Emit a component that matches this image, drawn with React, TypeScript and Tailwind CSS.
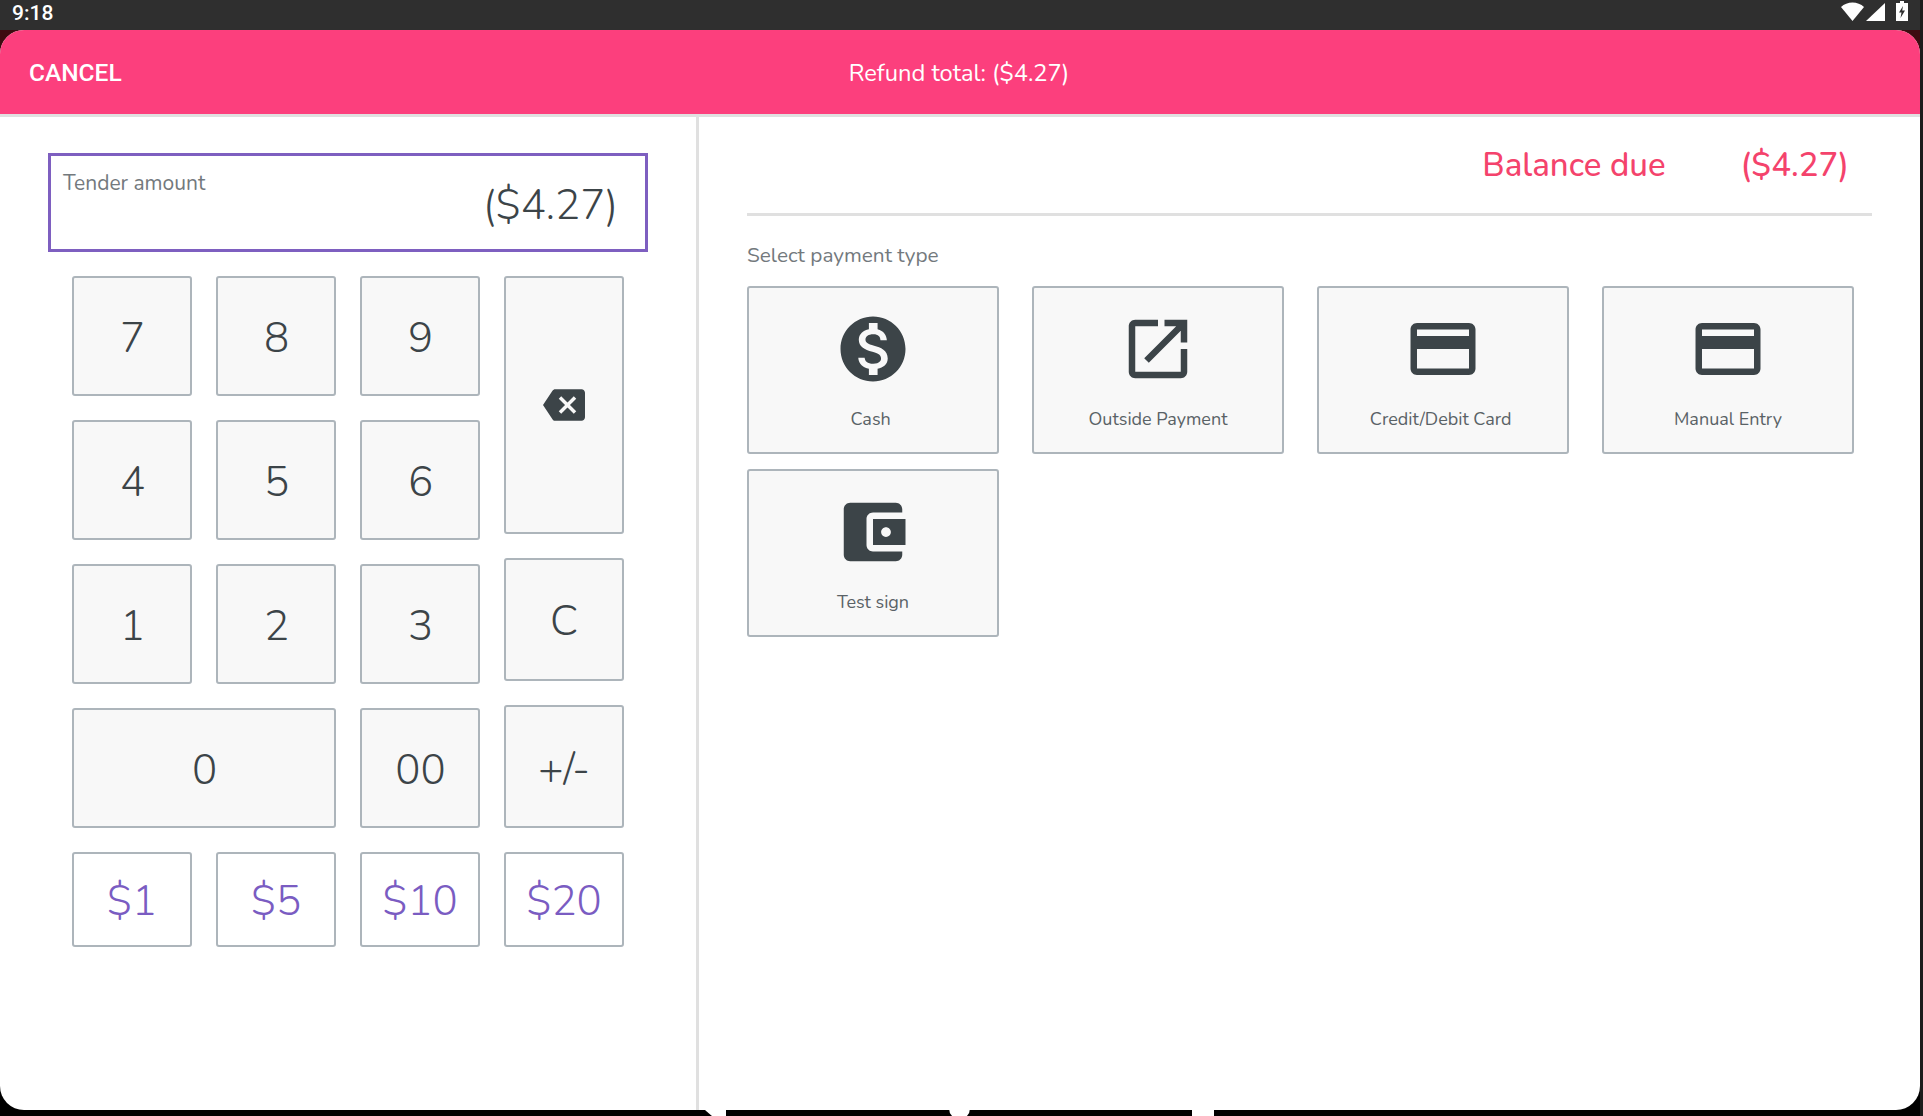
import React from "react";

const DARK = "#3c4448";

const Mat = ({ d, size, className }: { d: string; size: number; className?: string }) => (
  <svg width={size} height={size} viewBox="0 0 24 24" fill={DARK} className={className}>
    <path d={d} />
  </svg>
);

const paths = {
  cash: "M12 2C6.48 2 2 6.48 2 12s4.48 10 10 10 10-4.48 10-10S17.52 2 12 2zm1.41 16.09V20h-2.67v-1.93c-1.71-.36-3.16-1.46-3.27-3.4h1.96c.1 1.05.82 1.87 2.65 1.87 1.96 0 2.4-.98 2.4-1.59 0-.83-.44-1.61-2.67-2.14-2.48-.6-4.18-1.62-4.18-3.67 0-1.72 1.39-2.84 3.11-3.21V4h2.67v1.95c1.86.45 2.79 1.86 2.85 3.39H14.3c-.05-1.11-.64-1.87-2.22-1.87-1.5 0-2.4.68-2.4 1.64 0 .84.65 1.39 2.67 1.91s4.18 1.39 4.18 3.91c-.01 1.83-1.38 2.83-3.12 3.16z",
  outside: "M19 19H5V5h7V3H5c-1.11 0-2 .9-2 2v14c0 1.1.89 2 2 2h14c1.1 0 2-.9 2-2v-7h-2v7zM14 3v2h3.59l-9.83 9.83 1.41 1.41L19 6.41V10h2V3h-7z",
  card: "M20 4H4c-1.11 0-1.99.89-1.99 2L2 18c0 1.11.89 2 2 2h16c1.11 0 2-.89 2-2V6c0-1.11-.89-2-2-2zm0 14H4v-6h16v6zm0-10H4V6h16v2z",
  wallet: "M21 18v1c0 1.1-.9 2-2 2H5c-1.11 0-2-.9-2-2V5c0-1.1.89-2 2-2h14c1.1 0 2 .9 2 2v1h-9c-1.11 0-2 .9-2 2v8c0 1.1.89 2 2 2h9zm-9-2h10V8H12v8zm4-2.5c-.83 0-1.5-.67-1.5-1.5s.67-1.5 1.5-1.5 1.5.67 1.5 1.5-.67 1.5-1.5 1.5z",
  backspace: "M22 3H7c-.69 0-1.23.35-1.59.88L0 12l5.41 8.11c.36.53.9.89 1.59.89h15c1.1 0 2-.9 2-2V5c0-1.1-.9-2-2-2zm-3 12.59L17.59 17 14 13.41 10.41 17 9 15.59 12.59 12 9 8.41 10.41 7 14 10.59 17.59 7 19 8.41 15.41 12 19 15.59z",
};

const Key = ({ label, className = "" }: { label: string; className?: string }) => (
  <button className={`flex items-center justify-center rounded-[3px] border-2 border-[#adb5bb] bg-[#f8f8f8] text-[42px] font-light text-[#3c4448] ${className}`}>
    {label}
  </button>
);

const QuickKey = ({ label }: { label: string }) => (
  <button className="flex h-[95px] w-[120px] items-center justify-center rounded-[3px] border-2 border-[#adb5bb] bg-white pt-[3px] text-[42px] font-light text-[#7a5cc2]">
    {label}
  </button>
);

const PayCard = ({ icon, label }: { icon: string; label: string }) => (
  <button className="flex h-[168px] w-[252px] flex-col items-center rounded-[3px] border-2 border-[#adb5bb] bg-[#f8f8f8] pt-[22px]">
    <Mat d={icon} size={78} />
    <span className="mt-[19px] text-[18px] leading-[24px] text-[#5a6266]">{label}</span>
  </button>
);

export default function App() {
  return (
    <div className="relative flex h-[1116px] w-[1923px] overflow-hidden bg-[#1c1c1c] font-['Nunito','Lato',sans-serif]">
      <div className="flex w-[1920px] flex-col bg-black">
        <div className="flex h-[30px] shrink-0 items-center justify-between bg-[#2f2f2f] pl-3 pr-3 text-white">
          <span className="-mt-[5px] font-['Roboto',sans-serif] text-[21px] font-medium leading-[26px]">9:18</span>
          <svg width="67" height="22" viewBox="0 0 67 22" fill="white" className="self-start">
            <path d="M0 7 C6 1 17 1 23 7 L11.5 21 Z" />
            <path d="M44 3 V21 H25 Z" />
            <path d="M55 3 H59 V1 H63 V3 H67 V21 H55 Z M62 6 L58 12.5 H60.5 L59.5 18 L64 10.5 H61.2 Z" fillRule="evenodd" />
          </svg>
        </div>
        <div className="bg-[linear-gradient(to_bottom,#3d0b10_24px,#000_24px)]">
          <div className="flex h-[1080px] flex-col overflow-hidden rounded-[24px] bg-white">
            <header className="relative flex h-[84px] shrink-0 items-center justify-center bg-[#fc3f7d] pt-[2px] text-white">
              <span className="absolute left-[29px] font-['Roboto',sans-serif] text-[24.5px] font-medium">CANCEL</span>
              <span className="-ml-[2px] mt-[2px] text-[23.7px]">Refund total: ($4.27)</span>
            </header>
            <div className="flex min-h-0 flex-1 border-t-[3px] border-[#e0e0e0]">
              <aside className="w-[699px] shrink-0 border-r-[3px] border-[#e0e0e0] pl-[48px] pt-[36px]">
                <div className="flex h-[99px] w-[600px] flex-col border-[3px] border-[#7e5fc0] px-3 pt-[15px]">
                  <span className="text-[21px] leading-[24px] text-[#73797d]">Tender amount</span>
                  <span className="-mt-[15px] pr-[15px] text-right text-[42px] font-light leading-[52px] text-[#3c4448]">($4.27)</span>
                </div>
                <div className="ml-[24px] mt-[24px] flex w-[552px] gap-[24px]">
                  <div className="grid w-[408px] grid-cols-3 gap-[24px]">
                    {["7", "8", "9", "4", "5", "6", "1", "2", "3"].map((n) => (
                      <Key key={n} label={n} className="h-[120px] pl-[1px] pt-[5px]" />
                    ))}
                    <Key label="0" className="col-span-2 h-[120px] pl-[1px] pt-[5px]" />
                    <Key label="00" className="h-[120px] pl-[1px] pt-[5px]" />
                  </div>
                  <div className="flex w-[120px] flex-col gap-[24px]">
                    <button className="flex h-[258px] items-center justify-center rounded-[3px] border-2 border-[#adb5bb] bg-[#f8f8f8]">
                      <Mat d={paths.backspace} size={42} />
                    </button>
                    <Key label="C" className="h-[123px] pt-[3px]" />
                    <Key label="+/-" className="h-[123px] pt-[5px]" />
                  </div>
                </div>
                <div className="ml-[24px] mt-[24px] flex gap-[24px]">
                  {["$1", "$5", "$10", "$20"].map((n) => (
                    <QuickKey key={n} label={n} />
                  ))}
                </div>
              </aside>
              <main className="flex-1 pl-[48px]">
                <div className="flex h-[99px] w-[1125px] items-center justify-end border-b-[3px] border-[#e0e0e0] pr-[23px] pt-[2px] text-[33px] font-medium text-[#f4436c]">
                  <span>Balance due</span>
                  <span className="ml-[75px]">($4.27)</span>
                </div>
                <p className="mt-[27px] text-[20.8px] leading-[24px] text-[#73797d]">Select payment type</p>
                <div className="mt-[19px] flex flex-wrap gap-x-[33px] gap-y-[15px]">
                  <PayCard icon={paths.cash} label={"Cash\u00a0"} />
                  <PayCard icon={paths.outside} label="Outside Payment" />
                  <PayCard icon={paths.card} label={"Credit/Debit Card\u00a0"} />
                  <PayCard icon={paths.card} label="Manual Entry" />
                  <PayCard icon={paths.wallet} label="Test sign" />
                </div>
              </main>
            </div>
          </div>
        </div>
      </div>
      <div className="absolute bottom-0 left-[705px] h-[6px] w-[21px] bg-white [clip-path:polygon(0_0,100%_0,100%_100%,33%_100%)]" />
      <div className="absolute -bottom-[3px] left-[949px] h-[21px] w-[21px] rounded-full bg-white" />
      <div className="absolute bottom-0 left-[1192px] h-[6px] w-[22px] bg-white" />
    </div>
  );
}
